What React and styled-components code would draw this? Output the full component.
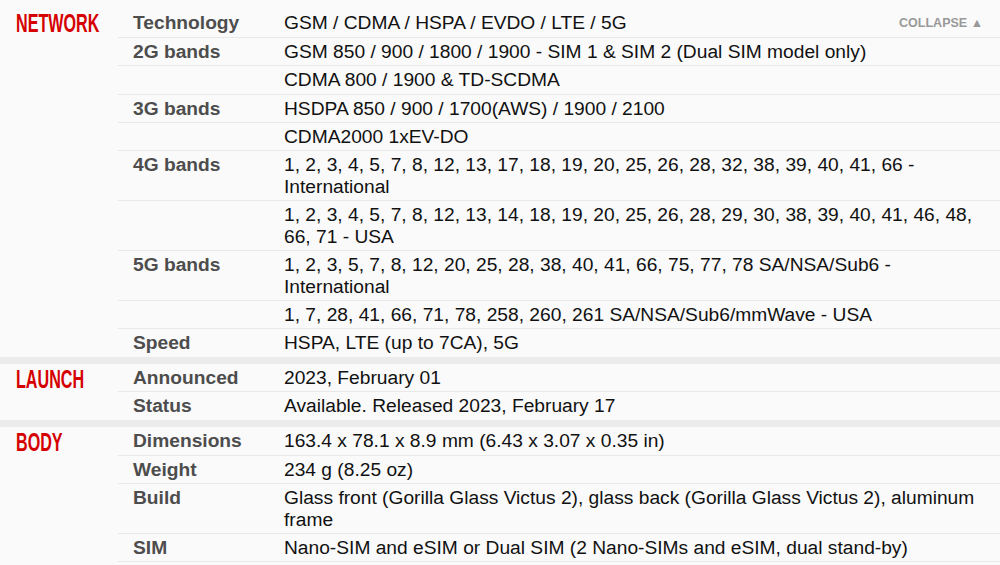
import React from "react";
import styled, { createGlobalStyle } from "styled-components";

const Global = createGlobalStyle`
  html, body { margin: 0; padding: 0; background: #fafafa; }
  body { font-family: "Liberation Sans", Arial, sans-serif; }
`;

const Page = styled.div`
  width: 1000px;
  padding-top: 8px;
  background: #fafafa;
`;

const Section = styled.section`
  display: flex;
  border-bottom: ${(p) => (p.$last ? "0" : "7px solid #ebebeb")};
`;

const Heading = styled.div`
  width: 118px;
  flex: none;
  padding: 2px 0 0 16px;
  box-sizing: border-box;
`;

const HeadingText = styled.span`
  display: inline-block;
  font-family: "Liberation Sans", Arial, sans-serif;
  font-weight: 700;
  font-size: 26px;
  line-height: 26px;
  color: #d50000;
  transform: scaleX(0.62);
  transform-origin: left center;
  white-space: nowrap;
`;

const Rows = styled.div`
  flex: 1;
  display: flex;
  flex-direction: column;
`;

const Row = styled.div`
  display: grid;
  grid-template-columns: 166px 1fr;
  padding: ${(p) => (p.$first ? "4px 0 3.4px" : "3px 0 2.1px")};
  border-bottom: 1px solid ${(p) => (p.$last ? "transparent" : "#e9e9e9")};
  font-size: 19.2px;
  line-height: 22px;
`;

const Label = styled.div`
  padding-left: 15px;
  font-weight: 700;
  color: #4d4d4d;
`;

const Value = styled.div`
  padding-right: 15px;
  color: #111;
  display: flex;
  justify-content: space-between;
  align-items: center;
`;

const Collapse = styled.span`
  font-size: 12.5px;
  line-height: 14px;
  font-weight: 700;
  color: #999;
  margin-top: 0;
  margin-right: 2px;
  white-space: nowrap;
`;

const sections = [
  {
    title: "NETWORK",
    rows: [
      ["Technology", "GSM / CDMA / HSPA / EVDO / LTE / 5G"],
      ["2G bands", "GSM 850 / 900 / 1800 / 1900 - SIM 1 & SIM 2 (Dual SIM model only)"],
      ["", "CDMA 800 / 1900 & TD-SCDMA"],
      ["3G bands", "HSDPA 850 / 900 / 1700(AWS) / 1900 / 2100"],
      ["", "CDMA2000 1xEV-DO"],
      ["4G bands", "1, 2, 3, 4, 5, 7, 8, 12, 13, 17, 18, 19, 20, 25, 26, 28, 32, 38, 39, 40, 41, 66 - International"],
      ["", "1, 2, 3, 4, 5, 7, 8, 12, 13, 14, 18, 19, 20, 25, 26, 28, 29, 30, 38, 39, 40, 41, 46, 48, 66, 71 - USA"],
      ["5G bands", "1, 2, 3, 5, 7, 8, 12, 20, 25, 28, 38, 40, 41, 66, 75, 77, 78 SA/NSA/Sub6 - International"],
      ["", "1, 7, 28, 41, 66, 71, 78, 258, 260, 261 SA/NSA/Sub6/mmWave - USA"],
      ["Speed", "HSPA, LTE (up to 7CA), 5G"],
    ],
  },
  {
    title: "LAUNCH",
    rows: [
      ["Announced", "2023, February 01"],
      ["Status", "Available. Released 2023, February 17"],
    ],
  },
  {
    title: "BODY",
    rows: [
      ["Dimensions", "163.4 x 78.1 x 8.9 mm (6.43 x 3.07 x 0.35 in)"],
      ["Weight", "234 g (8.25 oz)"],
      ["Build", "Glass front (Gorilla Glass Victus 2), glass back (Gorilla Glass Victus 2), aluminum frame"],
      ["SIM", "Nano-SIM and eSIM or Dual SIM (2 Nano-SIMs and eSIM, dual stand-by)"],
    ],
  },
];

export default function App() {
  return (
    <>
      <Global />
      <Page>
        {sections.map((s, si) => (
          <Section key={s.title} $last={si === sections.length - 1}>
            <Heading>
              <HeadingText>{s.title}</HeadingText>
            </Heading>
            <Rows>
              {s.rows.map(([label, value], ri) => (
                <Row
                  key={ri}
                  $first={si === 0 && ri === 0}
                  $last={ri === s.rows.length - 1 && si !== sections.length - 1}
                >
                  <Label>{label}</Label>
                  <Value>
                    <span>{value}</span>
                    {si === 0 && ri === 0 && <Collapse>COLLAPSE ▲</Collapse>}
                  </Value>
                </Row>
              ))}
            </Rows>
          </Section>
        ))}
      </Page>
    </>
  );
}
